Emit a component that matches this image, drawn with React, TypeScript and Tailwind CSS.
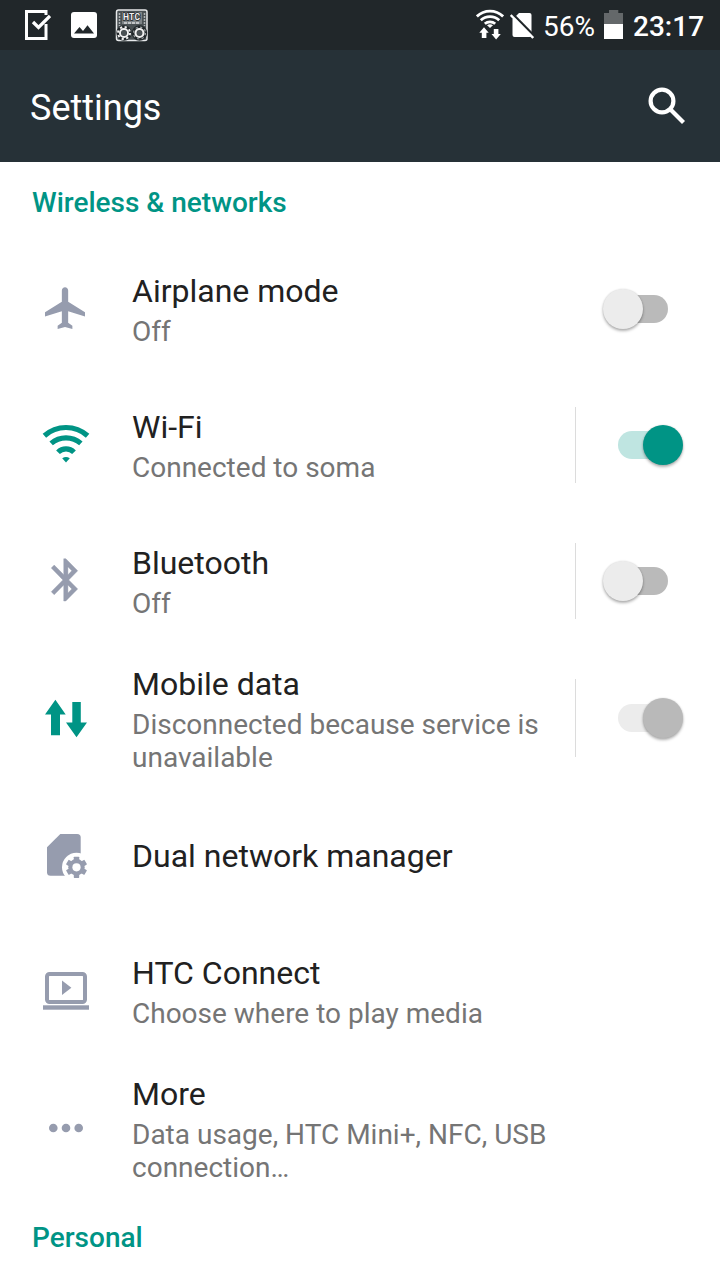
import type { ReactNode } from "react";

const GRAY = "#969cae";
const TEAL = "#009485";

type SwitchState = "off" | "on" | "disabled";

type Item = {
  title: string;
  summary?: string;
  icon: ReactNode;
  toggle?: SwitchState;
  divider?: boolean;
};

function Icon({ color, children }: { color: string; children: ReactNode }) {
  return (
    <svg width="48" height="48" viewBox="0 0 48 48" fill={color} className="ml-[42px] mr-[42px] shrink-0">
      {children}
    </svg>
  );
}

const ITEMS: Item[] = [
  {
    title: "Airplane mode",
    summary: "Off",
    toggle: "off",
    icon: (
      <Icon color={GRAY}>
        <path
          transform="translate(-1.2 -1.9) scale(2.105 2.085)"
          d="M21 16v-2l-8-5V3.5c0-.83-.67-1.5-1.5-1.5S10 2.67 10 3.5V9l-8 5v2l8-2.5V19l-2 1.5V22l3.5-1 3.5 1v-1.5L13 19v-5.5l8 2.5z"
        />
      </Icon>
    ),
  },
  {
    title: "Wi-Fi",
    summary: "Connected to soma",
    toggle: "on",
    divider: true,
    icon: (
      <Icon color={TEAL}>
        <g fill="none" stroke={TEAL} strokeWidth="5.2">
          <path d="M2.4 14.7A32.5 32.5 0 0 1 45.6 14.7" />
          <path d="M9.15 22.4A22.5 22.5 0 0 1 38.85 22.4" />
          <path d="M16 31.3A11.2 11.2 0 0 1 32 31.3" />
        </g>
        <path d="M20.2 37.2Q24 34.6 27.8 37.2L24 41.5z" />
      </Icon>
    ),
  },
  {
    title: "Bluetooth",
    summary: "Off",
    toggle: "off",
    divider: true,
    icon: (
      <Icon color={GRAY}>
        <path
          transform="translate(-1.1 -2.5) scale(2.077 2.115)"
          stroke={GRAY}
          strokeWidth="0.2"
          d="M17.71 7.71L12 2h-1v7.59L6.41 5 5 6.41 10.59 12 5 17.59 6.41 19 11 14.41V22h1l5.71-5.71-4.3-4.29 4.3-4.29zM13 5.83l1.88 1.88L13 9.59V5.83zm1.88 10.46L13 18.17v-3.76l1.88 1.88z"
        />
      </Icon>
    ),
  },
  {
    title: "Mobile data",
    summary: "Disconnected because service is unavailable",
    toggle: "disabled",
    divider: true,
    icon: (
      <Icon color={TEAL}>
        <path d="M13.4 5.7L23.7 20.5H18V41.3H9V20.5H3z" />
        <path d="M30.3 8H38.8V28.5H45L34.5 43.3 24 28.5H30.3z" />
      </Icon>
    ),
  },
  {
    title: "Dual network manager",
    icon: (
      <Icon color={GRAY}>
        <path d="M18.3 3H35.2A3.5 3.5 0 0 1 38.7 6.5V44.7H8.5A3.5 3.5 0 0 1 5 41.2V16.3z" />
        <circle cx="34.5" cy="36.3" r="14.5" fill="#fff" />
        <circle cx="34.5" cy="36.3" r="8.2" />
        <rect x="31.8" y="25.7" width="5.4" height="21.2" rx="0.6" />
        <rect x="31.8" y="25.7" width="5.4" height="21.2" rx="0.6" transform="rotate(60 34.5 36.3)" />
        <rect x="31.8" y="25.7" width="5.4" height="21.2" rx="0.6" transform="rotate(120 34.5 36.3)" />
        <circle cx="34.5" cy="36.3" r="4.1" fill="#fff" />
      </Icon>
    ),
  },
  {
    title: "HTC Connect",
    summary: "Choose where to play media",
    icon: (
      <Icon color={GRAY}>
        <rect x="5" y="7" width="38" height="28" rx="2.5" fill="none" stroke={GRAY} strokeWidth="4" />
        <path d="M20 13.6V28l9.4-7.2z" />
        <rect x="1" y="38.3" width="46" height="4.4" />
      </Icon>
    ),
  },
  {
    title: "More",
    summary: "Data usage, HTC Mini+, NFC, USB connection…",
    icon: (
      <Icon color={GRAY}>
        <circle cx="11.3" cy="24" r="4.3" />
        <circle cx="24" cy="24" r="4.3" />
        <circle cx="36.7" cy="24" r="4.3" />
      </Icon>
    ),
  },
];

function Toggle({ state }: { state: SwitchState }) {
  const track = { off: "bg-[#bababa]", on: "bg-[#bfe5e1]", disabled: "bg-[#ececec]" }[state];
  const thumb = {
    off: "-left-[15px] bg-[#ececec]",
    on: "left-[25px] bg-[#009485]",
    disabled: "left-[25px] bg-[#b9b9b9]",
  }[state];

  return (
    <div className={`relative h-7 w-[50px] rounded-full ${track}`}>
      <div
        className={`absolute -top-1.5 h-10 w-10 rounded-full shadow-[0_2px_3px_rgba(0,0,0,0.3),0_0_2px_rgba(0,0,0,0.12)] ${thumb}`}
      />
    </div>
  );
}

function Row({ item }: { item: Item }) {
  const tall = item.title === "Mobile data" || item.title === "More";
  return (
    <div className={`flex items-center ${tall ? "h-[138px]" : "h-[136px]"}`}>
      {item.icon}
      <div className="w-[428px] shrink-0">
        <div className={`text-[32px] leading-[42px] text-[#212121] ${item.summary ? "" : "pt-0.5"}`}>
          {item.title}
        </div>
        {item.summary && (
          <div className="pt-[3px] text-[28px] leading-[33px] text-[#757575]">{item.summary}</div>
        )}
      </div>
      {item.toggle && (
        <div
          className={`ml-[15px] flex items-center border-l pl-[42px] ${tall ? "h-[78px]" : "h-[76px]"} ${
            item.divider ? "border-[#dcdcdc]" : "border-transparent"
          }`}
        >
          <Toggle state={item.toggle} />
        </div>
      )}
    </div>
  );
}

function StatusBar() {
  return (
    <div className="flex h-[50px] items-center bg-[#21272a] text-[28px] text-white">
      {/* Notifications */}
      <svg width="27" height="50" viewBox="0 0 27 50" className="ml-6" fill="none" stroke="#fff">
        <path d="M22 15V11.5H2.5V38.5H22V24" strokeWidth="3" />
        <path d="M9 22L14.5 27.5L26 16" strokeWidth="3.3" />
      </svg>
      <svg width="26" height="50" viewBox="0 0 26 50" className="ml-5">
        <rect y="12" width="26" height="26" rx="3" fill="#fff" />
        <path d="M3 33.5L8.5 27L12 31L16.5 25.2L23 33.5z" fill="#21272a" />
      </svg>
      <svg width="34" height="50" viewBox="0 0 34 50" className="ml-[18px]">
        <rect x="1.5" y="10" width="30.5" height="30.5" rx="2" fill="#4a5154" stroke="#e7e9ea" strokeWidth="1.5" />
        <path d="M4.5 13V26M29.5 13V26" stroke="#aeb3b5" strokeWidth="1.5" strokeDasharray="2 1" />
        <rect x="7" y="12" width="20" height="12" fill="#7d8386" />
        <text
          x="8"
          y="20"
          fill="#f2f2f2"
          stroke="#21272a"
          strokeWidth="1.6"
          paintOrder="stroke"
          fontSize="8.5"
          fontWeight="700"
          fontFamily="Roboto, sans-serif"
          textLength="17"
        >
          HTC
        </text>
        <path d="M9 23H25" stroke="#d7dadb" strokeWidth="1.5" strokeDasharray="3 1" />
        <g fill="none">
          <circle cx="9" cy="33" r="5.2" stroke="#21272a" strokeWidth="5" />
          <circle cx="24.5" cy="33" r="5.2" stroke="#21272a" strokeWidth="5" />
          <circle cx="9" cy="33" r="4" stroke="#f0f0f0" strokeWidth="2" />
          <circle cx="9" cy="33" r="6" stroke="#f0f0f0" strokeWidth="2" strokeDasharray="2.2 2.5" />
          <circle cx="24.5" cy="33" r="4" stroke="#f0f0f0" strokeWidth="2.2" />
          <circle cx="24.5" cy="33" r="6" stroke="#9da2a4" strokeWidth="1.2" strokeDasharray="2.2 2.5" />
        </g>
      </svg>

      {/* System status */}
      <svg width="28" height="50" viewBox="0 0 28 50" className="ml-auto">
        <g fill="none" stroke="#fff" strokeWidth="2.8">
          <path d="M0.9 16.4A19 19 0 0 1 27.1 16.4" />
          <path d="M4.8 20.3A13.5 13.5 0 0 1 23.2 20.3" />
          <path d="M8.8 23.8A8 8 0 0 1 19.2 23.8" />
        </g>
        <path d="M11 25.2Q14 23.4 17 25.2L14 28z" fill="#fff" />
        <path d="M8 27.3L12.7 32.7H10.4V38H5.8V32.7H3.3z" fill="#fff" />
        <path d="M17.8 29H22.4V34.1H24.8L20.1 39.5L15.5 34.1H17.8z" fill="#fff" />
      </svg>
      <svg width="24" height="50" viewBox="0 0 24 50" className="ml-1.5">
        <path d="M9 13H19.5A2 2 0 0 1 21.5 15V35A2 2 0 0 1 19.5 37H4.5A2 2 0 0 1 2.5 35V19.5z" fill="#fff" />
        <path d="M1.8 13.2L25 36.7" stroke="#21272a" strokeWidth="2.4" />
        <path d="M0.7 15L23.2 38" stroke="#fff" strokeWidth="2.4" />
      </svg>
      <span className="ml-[9px] w-[52px] pt-0.5 leading-[33px]">56%</span>
      <svg width="19" height="50" viewBox="0 0 19 50" className="ml-[9px]">
        <path d="M5 10H14.3V13H19V24H0V13H5z" fill="#64686a" />
        <rect y="24" width="19" height="15" fill="#fff" />
      </svg>
      <span className="ml-[10px] mr-4 w-[71px] pt-0.5 font-medium leading-[33px]">23:17</span>
    </div>
  );
}

function AppBar() {
  return (
    <div className="flex h-28 items-center justify-between bg-[#263137] pl-[30px] pr-[34px]">
      <h1 className="pt-1 text-[36px] leading-[42px] text-white">Settings</h1>
      <svg width="38" height="38" viewBox="0 0 38 38" fill="none" stroke="#fff" strokeWidth="4.2">
        <circle cx="14" cy="14" r="11.4" />
        <path d="M22.5 22.5L35.5 35.5" />
      </svg>
    </div>
  );
}

function SectionTitle({ children }: { children: ReactNode }) {
  return <h2 className="pl-8 text-[28px] font-medium leading-[82px] text-[#009485]">{children}</h2>;
}

export default function App() {
  return (
    <div className="h-[1280px] w-[720px] overflow-hidden bg-white font-[Roboto,sans-serif]">
      <StatusBar />
      <AppBar />
      <div className="h-[79px]">
        <SectionTitle>Wireless &amp; networks</SectionTitle>
      </div>
      {ITEMS.map((item) => (
        <Row key={item.title} item={item} />
      ))}
      <SectionTitle>Personal</SectionTitle>
    </div>
  );
}
